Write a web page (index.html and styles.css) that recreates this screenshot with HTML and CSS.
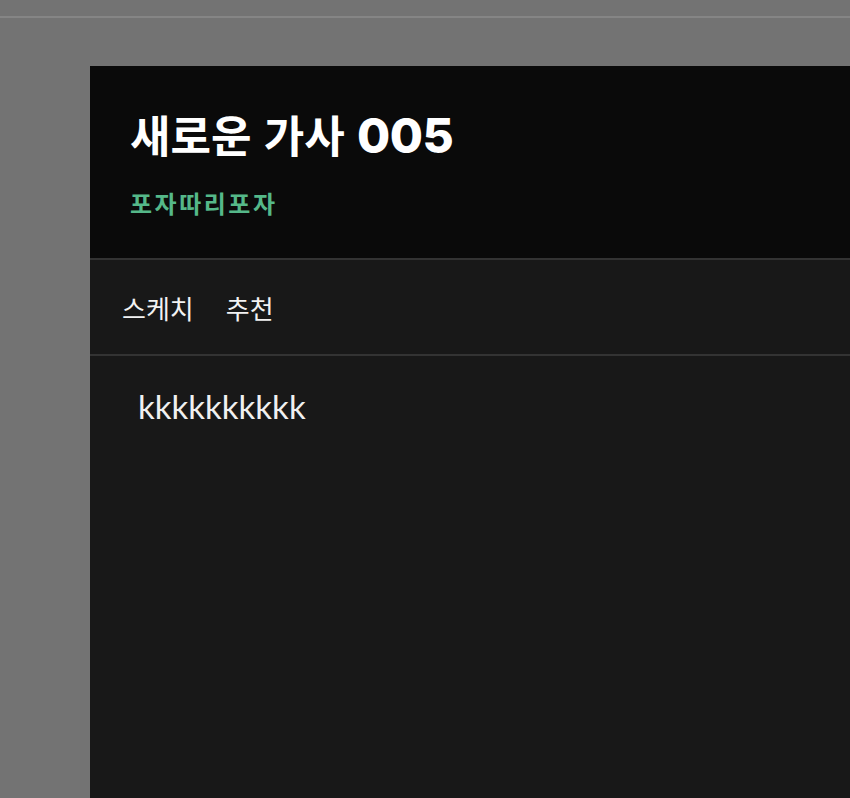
FILE: index.html
```html
<!DOCTYPE html>
<html lang="ko">
<head>
<meta charset="utf-8">
<link rel="stylesheet" href="styles.css">
</head>
<body>
<div class="topbar"></div>
<main class="panel">
  <header class="head">
    <h1 class="title">새로운 가사 <span class="num">005</span></h1>
    <p class="artist">포자따리포자</p>
  </header>
  <nav class="tabs">
    <span class="tab">스케치</span>
    <span class="tab">추천</span>
  </nav>
  <section class="content">
    <p class="lyrics">kkkkkkkkkk</p>
  </section>
</main>
</body>
</html>
```

FILE: styles.css
```css
html, body {
  margin: 0;
  padding: 0;
  height: 100%;
  overflow: hidden;
}
body {
  background: #737373;
  font-family: "Noto Sans CJK KR", "Noto Sans", sans-serif;
}
.topbar {
  height: 16px;
  border-bottom: 2px solid #858585;
}
.panel {
  margin: 48px 0 0 90px;
  background: #181818;
  height: 740px;
  display: flex;
  flex-direction: column;
}
.head {
  background: #0a0a0a;
  height: 194px;
  box-sizing: border-box;
  padding: 38px 40px 0;
  border-bottom: 2px solid #333333;
}
.title {
  margin: 0;
  font-family: "Noto Sans CJK KR", sans-serif;
  font-size: 44px;
  font-weight: 700;
  color: #ffffff;
  line-height: 60px;
}
.num {
  font-family: Inter, sans-serif;
  font-size: 48px;
  font-weight: 800;
  letter-spacing: -0.5px;
}
.artist {
  margin: 22px 0 0;
  font-size: 24px;
  font-weight: 700;
  letter-spacing: 2.5px;
  color: #55b889;
  line-height: 30px;
}
.tabs {
  height: 96px;
  box-sizing: border-box;
  border-bottom: 2px solid #333333;
  display: flex;
  align-items: center;
  gap: 32px;
  padding: 0 32px;
}
.tab {
  font-size: 26px;
  color: #f2f2f2;
  font-weight: 400;
}
.content {
  padding: 30px 48px;
}
.lyrics {
  margin: 0;
  font-family: Lato, sans-serif;
  font-size: 33px;
  color: #f0f0f0;
}
```
